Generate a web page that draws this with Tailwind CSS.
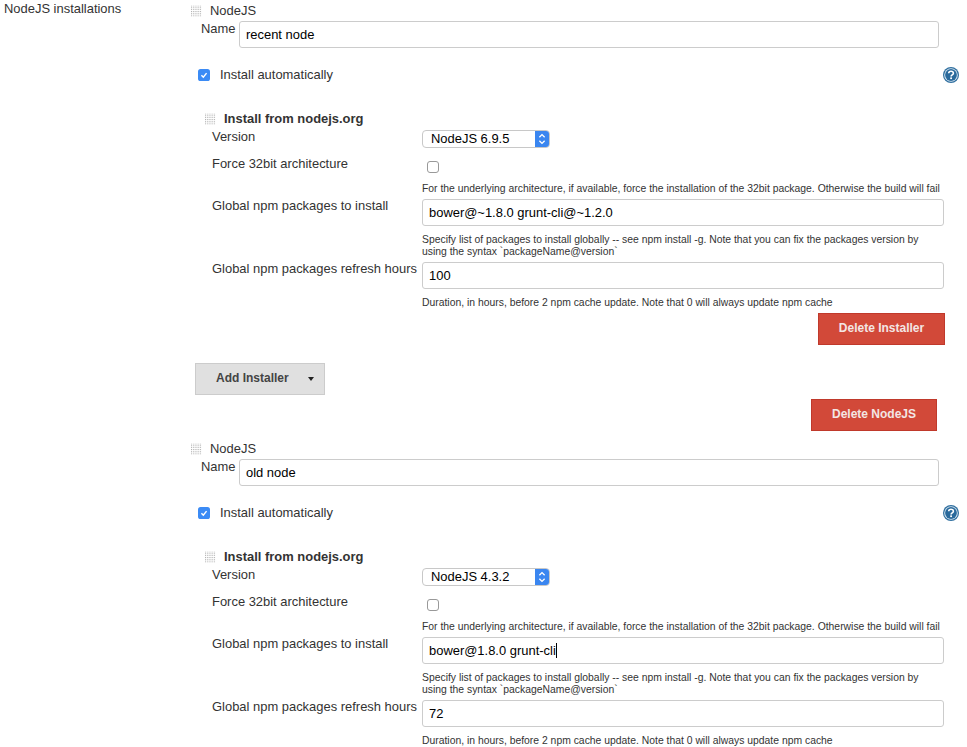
<!DOCTYPE html>
<html lang="en">
<head>
  <meta charset="utf-8">
  <title>NodeJS installations</title>
  <script src="https://cdn.jsdelivr.net/npm/@tailwindcss/browser@4"></script>
</head>
<body class="w-[967px] h-[747px] overflow-hidden bg-white text-[#333] text-[12.95px] leading-[16px] font-['Liberation_Sans',Arial,sans-serif]">
  <svg class="absolute w-0 h-0">
    <defs>
      <pattern id="dots" width="2" height="2" patternUnits="userSpaceOnUse"><rect width="1" height="1" fill="#aaa"/></pattern>
      <symbol id="grip" viewBox="0 0 12 12"><rect width="12" height="12" fill="url(#dots)"/></symbol>
      <symbol id="help" viewBox="0 0 16 16">
        <circle cx="8" cy="8" r="8" fill="#2f6f9f"/>
        <circle cx="8" cy="8" r="6.800" fill="#dce9f3"/>
        <circle cx="8" cy="8" r="5.900" fill="#2a6a9c"/>
        <path d="M5.700 6.300C5.800 4.900 6.900 4.200 8 4.200c1.300 0 2.400.8 2.400 2.100 0 1.600-2.300 1.700-2.300 3.200" fill="none" stroke="#fff" stroke-width="1.600"/>
        <rect x="7.200" y="10.400" width="1.800" height="1.700" fill="#fff"/>
      </symbol>
      <symbol id="tick" viewBox="0 0 14 14"><rect width="14" height="14" rx="3" fill="#3b8bf5"/><path d="M4 7.300l2.200 2.200L10 4.800" fill="none" stroke="#fff" stroke-width="1.700"/></symbol>
      <symbol id="updown" viewBox="0 0 16 18"><path d="M5 7l3-3 3 3M5 11l3 3 3-3" fill="none" stroke="#fff" stroke-width="1.500"/></symbol>
    </defs>
  </svg>

  <div class="flex">
    <div class="w-[186px] shrink-0 pl-1 pt-px">NodeJS installations</div>

    <div class="w-[781px]">
      <!-- recent node -->
      <section class="pt-[3px]">
        <div class="flex items-center h-[15px] pl-[5px] gap-[8px]"><svg class="w-[11px] h-[12px]"><use href="#grip"/></svg><span>NodeJS</span></div>
        <div class="flex h-[27px] mt-[3px] pl-[15px]"><span class="w-[38px] shrink-0">Name</span><input class="w-[700px] h-[27px] border border-[#ccc] rounded-[3px] px-[6px] text-black" value="recent node"></div>
        <div class="flex items-center h-[18px] mt-[18px] pl-[12px] pr-[8px]"><svg class="w-[12px] h-[12px] mr-[10px]"><use href="#tick"/></svg><span>Install automatically</span><svg class="w-[16px] h-[16px] ml-auto"><use href="#help"/></svg></div>
        <div class="flex items-center h-[16px] mt-[27px] pl-[19px] gap-[8px] font-bold"><svg class="w-[11px] h-[12px]"><use href="#grip"/></svg><span>Install from nodejs.org</span></div>
        <div class="flex h-[18px] mt-[3px] pl-[26px]"><span class="w-[210px] shrink-0 -mt-[1px]">Version</span><div class="flex w-[128px] h-[18px] border border-[#c8c8c8] rounded-[4px] overflow-hidden"><span class="flex-1 pl-[8px] text-black">NodeJS 6.9.5</span><span class="w-[14px] bg-[#3a86f0]"><svg class="w-[14px] h-[16px]"><use href="#updown"/></svg></span></div></div>
        <div class="flex h-[27px] mt-[8px] pl-[26px]"><span class="w-[210px] shrink-0">Force 32bit architecture</span><span class="ml-[5px] mt-[5px] w-[12px] h-[12px] border border-[#999] rounded-[3px]"></span></div>
        <p class="ml-[236px] text-[10.38px] leading-[12px] h-[12px] whitespace-nowrap">For the underlying architecture, if available, force the installation of the 32bit package. Otherwise the build will fail</p>
        <div class="flex h-[27px] mt-[4px] pl-[26px]"><span class="w-[210px] shrink-0 -mt-[1px]">Global npm packages to install</span><input class="w-[522px] h-[27px] border border-[#ccc] rounded-[3px] px-[6px] text-black" value="bower@~1.8.0 grunt-cli@~1.2.0"></div>
        <p class="ml-[236px] w-[510px] text-[10.38px] leading-[12px] mt-[8px]">Specify list of packages to install globally -- see npm install -g. Note that you can fix the packages version by using the syntax `packageName@version`</p>
        <div class="flex h-[27px] mt-[4px] pl-[26px]"><span class="w-[210px] shrink-0 -mt-[1px]">Global npm packages refresh hours</span><input class="w-[522px] h-[27px] border border-[#ccc] rounded-[3px] px-[6px] text-black" value="100"></div>
        <p class="ml-[236px] text-[10.38px] leading-[12px] mt-[8px]">Duration, in hours, before 2 npm cache update. Note that 0 will always update npm cache</p>
        <div class="flex justify-end w-[759px] mt-[4px]"><button class="w-[127px] h-[32px] pb-[2px] bg-[#d24939] border border-[#c0392b] text-[#f3e6e4] text-[12px] font-bold">Delete Installer</button></div>
      </section>
      <button class="flex items-center w-[130px] h-[32px] pb-[2px] mt-[18px] ml-[9px] bg-[#e0e0e0] border border-[#ccc] text-[#444] text-[12px] font-bold pl-[20px]">Add Installer<span class="ml-[19px] mt-[2px] w-0 h-0 border-x-[3.500px] border-x-transparent border-t-[4px] border-t-[#222]"></span></button>
      <div class="flex justify-end w-[751px] mt-[4px]"><button class="w-[126px] h-[32px] pb-[2px] bg-[#d24939] border border-[#c0392b] text-[#f3e6e4] text-[12px] font-bold">Delete NodeJS</button></div>

      <!-- old node -->
      <section class="pt-[10px]">
        <div class="flex items-center h-[15px] pl-[5px] gap-[8px]"><svg class="w-[11px] h-[12px]"><use href="#grip"/></svg><span>NodeJS</span></div>
        <div class="flex h-[27px] mt-[3px] pl-[15px]"><span class="w-[38px] shrink-0">Name</span><input class="w-[700px] h-[27px] border border-[#ccc] rounded-[3px] px-[6px] text-black" value="old node"></div>
        <div class="flex items-center h-[18px] mt-[18px] pl-[12px] pr-[8px]"><svg class="w-[12px] h-[12px] mr-[10px]"><use href="#tick"/></svg><span>Install automatically</span><svg class="w-[16px] h-[16px] ml-auto"><use href="#help"/></svg></div>
        <div class="flex items-center h-[16px] mt-[27px] pl-[19px] gap-[8px] font-bold"><svg class="w-[11px] h-[12px]"><use href="#grip"/></svg><span>Install from nodejs.org</span></div>
        <div class="flex h-[18px] mt-[3px] pl-[26px]"><span class="w-[210px] shrink-0 -mt-[1px]">Version</span><div class="flex w-[128px] h-[18px] border border-[#c8c8c8] rounded-[4px] overflow-hidden"><span class="flex-1 pl-[8px] text-black">NodeJS 4.3.2</span><span class="w-[14px] bg-[#3a86f0]"><svg class="w-[14px] h-[16px]"><use href="#updown"/></svg></span></div></div>
        <div class="flex h-[27px] mt-[8px] pl-[26px]"><span class="w-[210px] shrink-0">Force 32bit architecture</span><span class="ml-[5px] mt-[5px] w-[12px] h-[12px] border border-[#999] rounded-[3px]"></span></div>
        <p class="ml-[236px] text-[10.38px] leading-[12px] h-[12px] whitespace-nowrap">For the underlying architecture, if available, force the installation of the 32bit package. Otherwise the build will fail</p>
        <div class="flex h-[27px] mt-[4px] pl-[26px]"><span class="w-[210px] shrink-0 -mt-[1px]">Global npm packages to install</span><div class="flex items-center w-[522px] h-[27px] border border-[#ccc] rounded-[3px] px-[6px] text-black">bower@1.8.0 grunt-cli<span class="w-px h-[15px] bg-black"></span></div></div>
        <p class="ml-[236px] w-[510px] text-[10.38px] leading-[12px] mt-[8px]">Specify list of packages to install globally -- see npm install -g. Note that you can fix the packages version by using the syntax `packageName@version`</p>
        <div class="flex h-[27px] mt-[4px] pl-[26px]"><span class="w-[210px] shrink-0 -mt-[1px]">Global npm packages refresh hours</span><input class="w-[522px] h-[27px] border border-[#ccc] rounded-[3px] px-[6px] text-black" value="72"></div>
        <p class="ml-[236px] text-[10.38px] leading-[12px] mt-[8px]">Duration, in hours, before 2 npm cache update. Note that 0 will always update npm cache</p>
      </section>
    </div>
  </div>
</body>
</html>
